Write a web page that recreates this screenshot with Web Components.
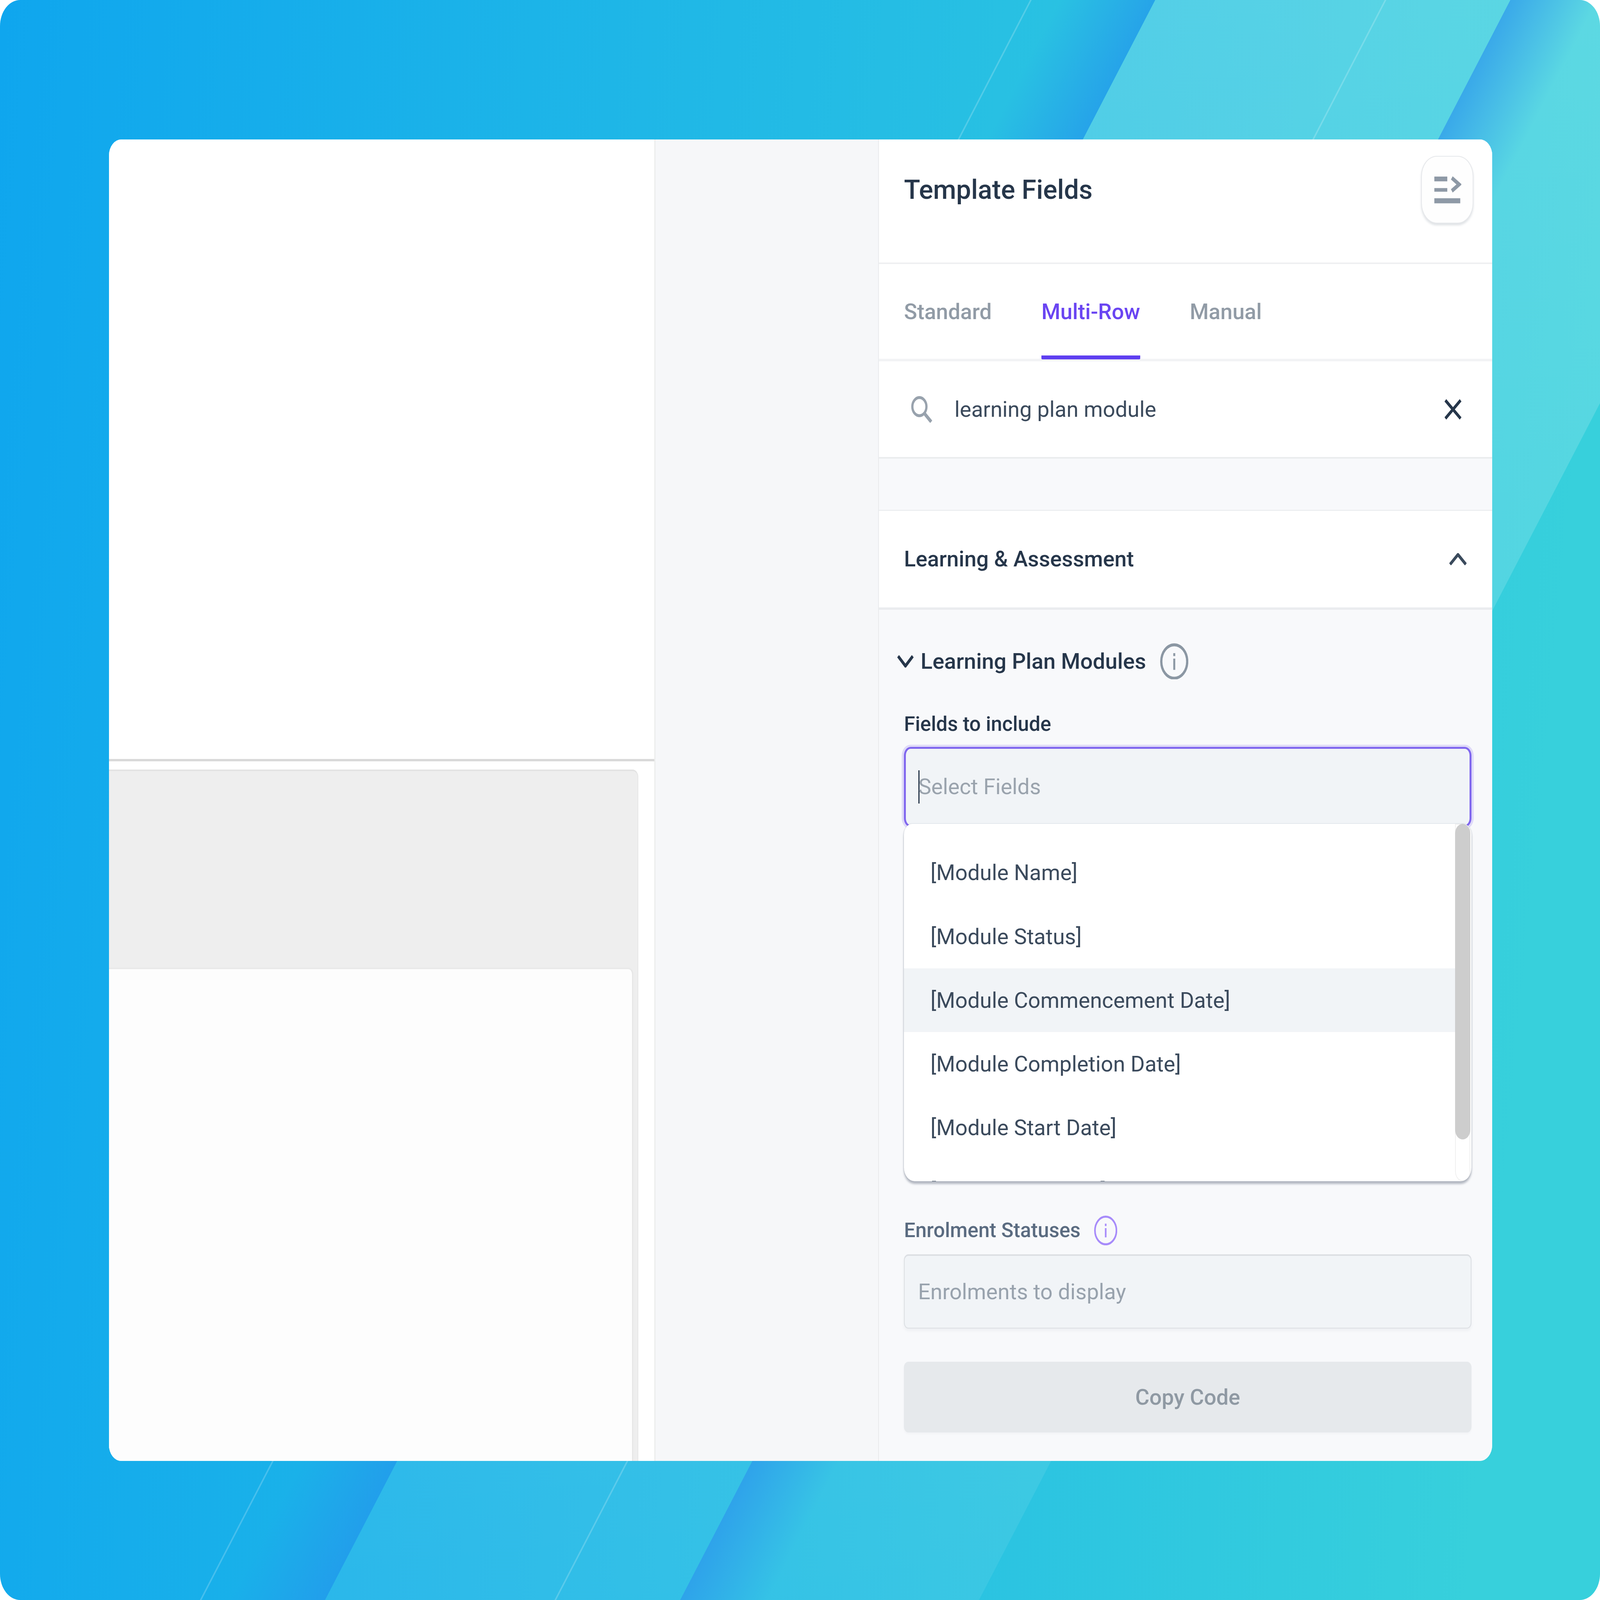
<!DOCTYPE html>
<html>
<head>
<meta charset="utf-8">
<style>
  /* one design pixel of the 5676x4408 layout, per axis */
  html { --x: calc(100vw / 5676); --y: calc(100vh / 4408); }
  html, body { margin: 0; padding: 0; background: #fff; }
  body { font-family: Roboto, "Liberation Sans", sans-serif; }
</style>
</head>
<body>
<app-frame>
  <editor-card>
    <canvas-pane></canvas-pane>
    <gutter-pane></gutter-pane>
    <fields-panel>
      <panel-header>Template Fields</panel-header>
      <tab-bar></tab-bar>
      <search-row>learning plan module</search-row>
      <section-head>Learning &amp; Assessment</section-head>
      <section-body>
        <sub-head>Learning Plan Modules</sub-head>
        <field-label>Fields to include</field-label>
        <select-input>Select Fields</select-input>
        <option-list>
          <option-item>[Module Name]</option-item>
          <option-item>[Module Status]</option-item>
          <option-item active>[Module Commencement Date]</option-item>
          <option-item>[Module Completion Date]</option-item>
          <option-item>[Module Start Date]</option-item>
          <option-item>[Module End Date]</option-item>
        </option-list>
        <status-label>Enrolment Statuses</status-label>
        <plain-input>Enrolments to display</plain-input>
        <copy-button>Copy Code</copy-button>
      </section-body>
    </fields-panel>
  </editor-card>
</app-frame>

<script>
const x = n => `calc(var(--x) * ${n})`;
const y = n => `calc(var(--y) * ${n})`;
const font = (weight, size) => `${weight} ${x(size)} Roboto, "Liberation Sans", sans-serif`;

class Comp extends HTMLElement {
    css = '';
    template = () => '<slot></slot>';

    connectedCallback() {
        if (this.shadowRoot) return;
        this.attachShadow({ mode: 'open' });
        this.shadowRoot.innerHTML = `<style>${this.css.trim()}</style>${this.template().trim()}`;
    }
}

const infoIcon = (w, h, color, sw) => `
    <svg style="width:${x(w)};height:${y(h)};flex:none" viewBox="0 0 100 100" preserveAspectRatio="none" fill="none">
        <circle cx="50" cy="50" r="${50 - sw / 2}" stroke="${color}" stroke-width="${sw}"/>
        <rect x="46.5" y="27" width="7" height="8" fill="${color}"/>
        <rect x="46.5" y="42" width="7" height="31" fill="${color}"/>
    </svg>`;

// a band running parallel to the diagonal, given by where it meets the top edge
const band = (a, b) => `${a},0 ${b},0 ${b - 2945},4408 ${a - 2945},4408`;

class AppFrame extends Comp {
    css = `
    :host {
        display: block;
        position: relative;
        box-sizing: border-box;
        width: 100vw;
        height: 100vh;
        padding: ${y(384)} ${x(383)} ${y(383)} ${x(387)};
        border-radius: ${x(72)} / ${y(72)};
        overflow: hidden;
    }
    svg { position: absolute; inset: 0; width: 100%; height: 100%; }
    ::slotted(*) { position: relative; }`;
    template = () => `
    <svg viewBox="0 0 5676 4408" preserveAspectRatio="none">
        <defs>
            <linearGradient id="base" gradientUnits="userSpaceOnUse" x1="0" y1="0" x2="5676" y2="700">
                <stop offset="0" stop-color="#0fa6ee"/>
                <stop offset="1" stop-color="#37d0dc"/>
            </linearGradient>
            <linearGradient id="light" gradientUnits="userSpaceOnUse" x1="0" y1="0" x2="0" y2="4408">
                <stop offset="0" stop-color="#fff" stop-opacity=".19"/>
                <stop offset="1" stop-color="#fff" stop-opacity=".07"/>
            </linearGradient>
            <linearGradient id="shadeA" gradientUnits="userSpaceOnUse" x1="3758" y1="0" x2="3993" y2="157">
                <stop offset="0" stop-color="#2496ec" stop-opacity="0"/>
                <stop offset="1" stop-color="#2496ec" stop-opacity=".7"/>
            </linearGradient>
            <linearGradient id="shadeB" gradientUnits="userSpaceOnUse" x1="5358" y1="0" x2="5572" y2="143">
                <stop offset="0" stop-color="#2c96ec" stop-opacity=".7"/>
                <stop offset="1" stop-color="#2c96ec" stop-opacity="0"/>
            </linearGradient>
        </defs>
        <rect width="5676" height="4408" fill="url(#base)"/>
        <polygon points="${band(4098, 6418)}" fill="url(#light)"/>
        <polygon points="${band(3758, 4098)}" fill="url(#shadeA)"/>
        <polygon points="${band(5358, 5668)}" fill="url(#shadeB)"/>
        <polygon points="${band(3654, 3660)}" fill="#fff" fill-opacity=".2"/>
        <polygon points="${band(4912, 4918)}" fill="#fff" fill-opacity=".2"/>
    </svg>
    <slot></slot>`;
}

class EditorCard extends Comp {
    css = `
    :host {
        display: flex;
        height: 100%;
        border-radius: ${x(44)} / ${y(44)};
        overflow: hidden;
        background: #fff;
    }`;
}

class CanvasPane extends Comp {
    css = `
    :host {
        display: flex;
        flex-direction: column;
        box-sizing: border-box;
        width: ${x(1938)};
        border-right: ${x(5)} solid #eceded;
        background: #fff;
    }
    .top { height: ${y(1707)}; border-bottom: ${y(7)} solid #d9d9d9; }
    .wrap { flex: 1; display: flex; padding: ${y(23)} ${x(56)} 0 0; }
    .grey {
        flex: 1;
        display: flex;
        box-sizing: border-box;
        padding: ${y(541)} ${x(16)} 0 0;
        background: #eeeeee;
        border-top: ${y(5)} solid #e3e3e3;
        border-right: ${x(4)} solid #e6e6e6;
        border-top-right-radius: ${x(20)} ${y(20)};
    }
    .inner {
        flex: 1;
        background: #fdfdfd;
        border-top: ${y(5)} solid #e9e9e9;
        border-right: ${x(5)} solid #e6e6e6;
        border-top-right-radius: ${x(18)} ${y(18)};
    }`;
    template = () => `
    <div class="top"></div>
    <div class="wrap"><div class="grey"><div class="inner"></div></div></div>`;
}

class GutterPane extends Comp {
    css = `
    :host {
        display: block;
        box-sizing: border-box;
        width: ${x(793)};
        background: #f6f7f9;
        border-right: ${x(3)} solid #e9ebed;
    }`;
}

class FieldsPanel extends Comp {
    css = `
    :host {
        flex: 1;
        display: flex;
        flex-direction: column;
        min-width: 0;
        background: #f8f9fb;
        color: #26364a;
    }`;
}

class PanelHeader extends Comp {
    css = `
    :host {
        display: flex;
        justify-content: space-between;
        align-items: center;
        box-sizing: border-box;
        height: ${y(344)};
        padding: ${y(48)} ${x(66)} ${y(110)} ${x(89)};
        background: #fff;
        border-bottom: ${y(5)} solid #eff0f2;
        font: ${font(500, 94)};
        color: #26364a;
    }
    .toggle {
        box-sizing: border-box;
        width: ${x(186)};
        height: ${y(186)};
        display: flex;
        align-items: center;
        justify-content: center;
        border: ${x(4)} solid #e6e8eb;
        border-radius: ${x(56)} / ${y(56)};
        background: #fefefe;
        box-shadow: 0 ${y(5)} ${y(6)} rgba(120,130,145,.22);
    }
    svg { width: ${x(100)}; height: ${y(84)}; }`;
    template = () => `
    <slot></slot>
    <div class="toggle">
        <svg viewBox="0 0 100 84" preserveAspectRatio="none" fill="none" stroke="#8e99a6">
            <path d="M4 12H50" stroke-width="13"/>
            <path d="M4 42H50" stroke-width="10"/>
            <path d="M4 72H96" stroke-width="14"/>
            <path d="M66 9L92 27L66 45" stroke-width="11"/>
        </svg>
    </div>`;
}

class TabBar extends Comp {
    css = `
    :host {
        display: flex;
        gap: ${x(176)};
        box-sizing: border-box;
        height: ${y(268)};
        padding-left: ${x(89)};
        background: #fff;
        box-shadow: inset 0 ${y(-7)} 0 #f2f3f5;
        font: ${font(500, 77)};
    }
    .tab {
        display: flex;
        align-items: center;
        box-sizing: border-box;
        height: ${y(262)};
        color: #919ba6;
    }
    .on {
        color: #6a45f2;
        border-bottom: ${y(11)} solid #5e3ff0;
        border-radius: 0 0 ${x(4)} ${x(4)};
        padding-top: ${y(11)};
    }`;
    template = () => `
    <div class="tab">Standard</div>
    <div class="tab on">Multi-Row</div>
    <div class="tab">Manual</div>`;
}

class SearchRow extends Comp {
    css = `
    :host {
        display: flex;
        align-items: center;
        box-sizing: border-box;
        height: ${y(268)};
        padding: 0 ${x(108)} 0 ${x(114)};
        background: #fff;
        border-bottom: ${y(5)} solid #eaecee;
        font: ${font(400, 77)};
        color: #3b4a5c;
    }
    .text { flex: 1; margin-left: ${x(78)}; }
    .find { width: ${x(76)}; height: ${y(74)}; }
    .clear { width: ${x(60)}; height: ${y(56)}; }`;
    template = () => `
    <svg class="find" viewBox="0 0 76 74" preserveAspectRatio="none" fill="none" stroke="#98a2ad" stroke-width="8">
        <circle cx="30" cy="29" r="25"/>
        <path d="M47 47L72 71" stroke-width="10"/>
    </svg>
    <div class="text"><slot></slot></div>
    <svg class="clear" viewBox="0 0 60 56" preserveAspectRatio="none" fill="none" stroke="#26364a" stroke-width="9">
        <path d="M3 3L57 53M57 3L3 53"/>
    </svg>`;
}

class SectionHead extends Comp {
    css = `
    :host {
        display: flex;
        justify-content: space-between;
        align-items: center;
        box-sizing: border-box;
        height: ${y(276)};
        margin-top: ${y(140)};
        padding: 0 ${x(90)} 0 ${x(89)};
        background: #fff;
        border-top: ${y(4)} solid #edeff1;
        border-bottom: ${y(7)} solid #eaecef;
        font: ${font(500, 77)};
        color: #26364a;
    }
    svg { width: ${x(62)}; height: ${y(34)}; }`;
    template = () => `
    <slot></slot>
    <svg viewBox="0 0 62 34" preserveAspectRatio="none" fill="none" stroke="#3a4a5c" stroke-width="9">
        <path d="M3 31L31 4L59 31"/>
    </svg>`;
}

class SectionBody extends Comp {
    css = `
    :host {
        display: block;
        flex: 1;
        padding: ${y(92)} ${x(73)} 0 ${x(89)};
    }`;
}

class SubHead extends Comp {
    css = `
    :host {
        display: flex;
        align-items: center;
        height: ${y(100)};
        margin-left: ${x(-24)};
        font: ${font(500, 78)};
        color: #26364a;
    }
    .text { margin-left: ${x(25)}; margin-right: ${x(50)}; }
    .fold { flex: none; width: ${x(58)}; height: ${y(34)}; }`;
    template = () => `
    <svg class="fold" viewBox="0 0 58 34" preserveAspectRatio="none" fill="none" stroke="#26364a" stroke-width="9">
        <path d="M3 3L29 30L55 3"/>
    </svg>
    <div class="text"><slot></slot></div>
    ${infoIcon(100, 100, '#8b97a3', 8)}`;
}

class FieldLabel extends Comp {
    css = `
    :host {
        display: flex;
        align-items: center;
        margin-top: ${y(80)};
        height: ${y(86)};
        font: ${font(500, 71.5)};
        color: #26364a;
    }`;
}

class SelectInput extends Comp {
    css = `
    :host {
        display: flex;
        align-items: center;
        box-sizing: border-box;
        height: ${y(220)};
        margin-top: ${y(20)};
        padding-left: ${x(44)};
        border: ${y(6)} solid #8067ee;
        border-radius: ${x(24)} / ${y(24)};
        background: #f1f4f7;
        box-shadow: 0 0 0 ${y(6)} rgba(125,97,238,.2);
        font: ${font(400, 77)};
        color: #9aa3ad;
    }
    .caret { width: ${x(4)}; height: ${y(92)}; margin-right: ${x(-4)}; background: #26364a; }`;
    template = () => `<div class="caret"></div><slot></slot>`;
}

class OptionList extends Comp {
    css = `
    :host {
        display: flex;
        position: relative;
        box-sizing: border-box;
        height: ${y(984)};
        margin-top: ${y(-8)};
        border-radius: ${x(30)} ${x(30)} ${x(38)} ${x(38)} / ${y(30)} ${y(30)} ${y(38)} ${y(38)};
        background: #fff;
        overflow: hidden;
        box-shadow: 0 0 ${y(3)} rgba(90,100,120,.35), 0 ${y(7)} ${y(6)} rgba(90,100,120,.42);
    }
    .rows { flex: 1; min-width: 0; padding-top: ${y(47)}; }
    .bar {
        flex: none;
        box-sizing: border-box;
        width: ${x(54)};
        margin-right: ${x(4)};
        border: ${x(3)} solid #f0f0f0;
        border-radius: 0 0 ${x(27)} ${x(27)} / 0 0 ${y(27)} ${y(27)};
    }
    .thumb {
        height: ${y(870)};
        margin: ${x(-3)};
        background: #cdcdcd;
        border-radius: ${x(27)} / ${y(27)};
    }`;
    template = () => `
    <div class="rows"><slot></slot></div>
    <div class="bar"><div class="thumb"></div></div>`;
}

class OptionItem extends Comp {
    css = `
    :host {
        display: flex;
        align-items: center;
        box-sizing: border-box;
        height: ${y(175.5)};
        padding-left: ${x(94)};
        font: ${font(400, 77)};
        color: #3b4a5c;
        white-space: nowrap;
    }
    :host([active]) { background: #f1f4f7; }`;
}

class StatusLabel extends Comp {
    css = `
    :host {
        display: flex;
        align-items: center;
        gap: ${x(48)};
        height: ${y(82)};
        margin-top: ${y(95)};
        font: ${font(500, 71.5)};
        color: #5a6b80;
    }`;
    template = () => `<slot></slot>${infoIcon(82, 82, '#a78bfa', 7)}`;
}

class PlainInput extends Comp {
    css = `
    :host {
        display: flex;
        align-items: center;
        box-sizing: border-box;
        height: ${y(204)};
        margin-top: ${y(25)};
        padding-left: ${x(47)};
        border: ${x(3)} solid #dcdfe3;
        border-top-width: ${y(5)};
        border-radius: ${x(16)} / ${y(16)};
        background: #f1f4f7;
        box-shadow: 0 ${y(6)} ${y(8)} rgba(90,100,120,.06);
        font: ${font(400, 77)};
        color: #98a2ad;
    }`;
}

class CopyButton extends Comp {
    css = `
    :host {
        display: flex;
        align-items: center;
        justify-content: center;
        height: ${y(195)};
        margin-top: ${y(92)};
        border-radius: ${x(16)} / ${y(16)};
        background: #e6e9ec;
        box-shadow: 0 ${y(4)} ${y(5)} rgba(90,100,120,.04);
        font: ${font(500, 77)};
        color: #8f99a3;
    }`;
}

customElements.define('app-frame', AppFrame);
customElements.define('editor-card', EditorCard);
customElements.define('canvas-pane', CanvasPane);
customElements.define('gutter-pane', GutterPane);
customElements.define('fields-panel', FieldsPanel);
customElements.define('panel-header', PanelHeader);
customElements.define('tab-bar', TabBar);
customElements.define('search-row', SearchRow);
customElements.define('section-head', SectionHead);
customElements.define('section-body', SectionBody);
customElements.define('sub-head', SubHead);
customElements.define('field-label', FieldLabel);
customElements.define('select-input', SelectInput);
customElements.define('option-list', OptionList);
customElements.define('option-item', OptionItem);
customElements.define('status-label', StatusLabel);
customElements.define('plain-input', PlainInput);
customElements.define('copy-button', CopyButton);
</script>
</body>
</html>
